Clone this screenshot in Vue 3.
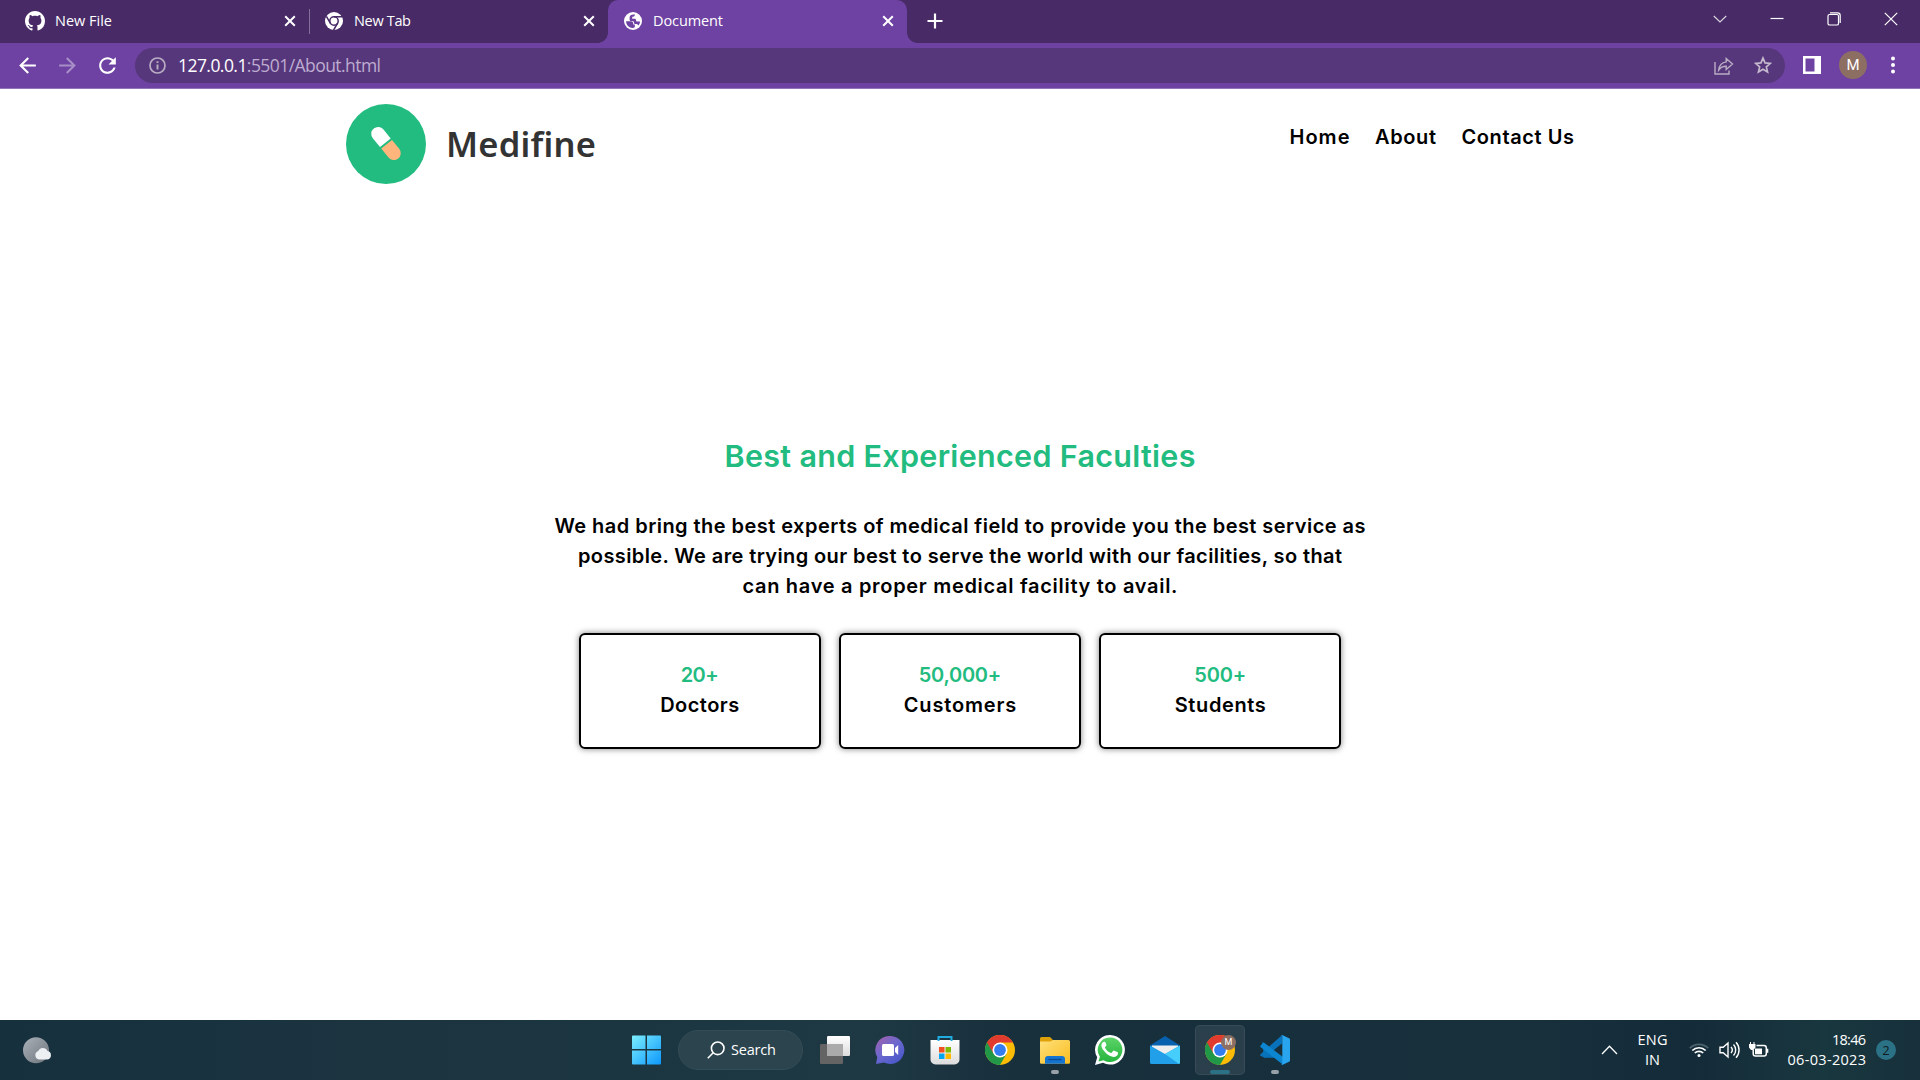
<script setup>
const tabs = [
  { title: 'New File', icon: 'github', width: 57 },
  { title: 'New Tab', icon: 'chrome', width: 57 },
  { title: 'Document', icon: 'globe', width: 70, active: true },
]
const links = [
  { label: 'Home', width: 60 },
  { label: 'About', width: 61 },
  { label: 'Contact Us', width: 112.5 },
]
const lines = [
  { text: 'We had bring the best experts of medical field to provide you the best service as', width: 811 },
  { text: 'possible. We are trying our best to serve the world with our facilities, so that', width: 764 },
  { text: 'can have a proper medical facility to avail.', width: 435 },
]
const stats = [
  { value: '20+', label: 'Doctors', vw: 38, lw: 79 },
  { value: '50,000+', label: 'Customers', vw: 82.5, lw: 112.5 },
  { value: '500+', label: 'Students', vw: 52, lw: 91 },
]

// Tracks a label so that it fills the given width.
const fit = (el, { value }) => {
  el.style.letterSpacing = '0px'
  const n = el.textContent.trim().length
  const natural = el.getBoundingClientRect().width
  el.style.letterSpacing = `${((value - natural) / (n - 1)).toFixed(3)}px`
  el.style.marginRight = `${(-(value - natural) / (n - 1)).toFixed(3)}px`
}
const vFit = { mounted: fit }
</script>

<template>
  <div class="screen">
    <header class="tabstrip">
      <div v-for="t in tabs" :key="t.title" class="tab" :class="{ active: t.active, first: t.icon === 'github' }">
        <svg v-if="t.icon === 'github'" class="fav gh" viewBox="0 0 16 16"><path fill="#fff" d="M8 0C3.58 0 0 3.58 0 8c0 3.54 2.29 6.53 5.47 7.59.4.07.55-.17.55-.38 0-.19-.01-.82-.01-1.49-2.01.37-2.53-.49-2.69-.94-.09-.23-.48-.94-.82-1.13-.28-.15-.68-.52-.01-.53.63-.01 1.08.58 1.23.82.72 1.21 1.87.87 2.33.66.07-.52.28-.87.51-1.07-1.78-.2-3.64-.89-3.64-3.95 0-.87.31-1.59.82-2.15-.08-.2-.36-1.02.08-2.12 0 0 .67-.21 2.2.82.64-.18 1.32-.27 2-.27s1.36.09 2 .27c1.53-1.04 2.2-.82 2.2-.82.44 1.1.16 1.92.08 2.12.51.56.82 1.27.82 2.15 0 3.07-1.87 3.75-3.65 3.95.29.25.54.73.54 1.48 0 1.07-.01 1.93-.01 2.2 0 .21.15.46.55.38A8.01 8.01 0 0 0 16 8c0-4.42-3.58-8-8-8z" /></svg>
        <svg v-else-if="t.icon === 'chrome'" class="fav" viewBox="0 0 18 18">
          <circle cx="9" cy="9" r="9" fill="#fff" />
          <circle cx="9" cy="9" r="4.2" fill="none" stroke="#472a66" stroke-width="1.5" />
          <path d="M9 4.8h8.2M5.3 11.1 1.4 4.3M12.7 11.1 8.6 18" fill="none" stroke="#472a66" stroke-width="1.5" />
        </svg>
        <svg v-else class="fav" viewBox="0 0 18 18">
          <circle cx="9" cy="9" r="9" fill="#fff" />
          <path fill="#6e42a2" d="M2 9.300h4.600c1.700 0 2.600.9 2.600 2.300v1h1.600v2.600c-.7.5-1.400.8-2.300.8A7 7 0 0 1 2 9.300z" />
          <path fill="#6e42a2" d="M10.800 2.200c.2 1.800-.9 2.500-2.600 2.600v1.900h2.300c1.100 0 1.600.6 1.600 1.700 0 .8.500 1.100 1.200 1.100H16c0 1.600-.7 3-1.700 4.100-.4-1-1.100-1.500-2.200-1.500h-.6c-1 0-1.500-.5-1.500-1.500 0-1-.5-1.400-1.500-1.400H7.300c-1 0-1.700-.7-1.700-1.700V5.800c0-1.700.9-2.800 2.500-3z" />
        </svg>
        <span class="tab-label"><span v-fit="t.width" class="fit">{{ t.title }}</span></span>
        <svg class="tab-x" viewBox="0 0 12 12"><path d="M1.200 1.200 10.800 10.800M10.800 1.200 1.200 10.800" stroke="#fff" stroke-width="2" /></svg>
        <i v-if="t.icon === 'github'" class="divider"></i>
      </div>
      <svg class="plus" viewBox="0 0 16 16"><path d="M8 .5v15M.5 8h15" stroke="#fff" stroke-width="2.2" /></svg>
      <div class="win">
        <svg viewBox="0 0 14 14"><path d="m.8 4 6.200 6L13.200 4" stroke-opacity=".8" /></svg>
        <svg viewBox="0 0 14 14"><path d="M.5 6.500h13" /></svg>
        <svg viewBox="0 0 14 14"><rect x="1" y="2.500" width="10.500" height="10.500" rx="1.600" /><path d="M3 .8h7.500a2.700 2.700 0 0 1 2.700 2.700V11" /></svg>
        <svg viewBox="0 0 14 14"><path d="m.8.8 12.400 12.400M13.200.8.8 13.200" /></svg>
      </div>
    </header>

    <div class="toolbar">
      <svg class="nav-i" viewBox="0 0 24 24"><path d="M20 11H7.830l5.590-5.590L12 4l-8 8 8 8 1.410-1.410L7.830 13H20v-2z" fill="#fff" /></svg>
      <svg class="nav-i dim" viewBox="0 0 24 24"><path d="m12 4-1.410 1.410L16.170 11H4v2h12.170l-5.580 5.590L12 20l8-8z" fill="#fff" /></svg>
      <svg class="nav-i" viewBox="0 0 24 24"><path d="M17.650 6.350C16.200 4.900 14.210 4 12 4c-4.420 0-7.990 3.580-7.990 8s3.570 8 7.990 8c3.730 0 6.840-2.550 7.730-6h-2.080c-.82 2.330-3.040 4-5.650 4-3.310 0-6-2.690-6-6s2.690-6 6-6c1.660 0 3.140.69 4.220 1.780L13 11h7V4l-2.350 2.350z" fill="#fff" /></svg>
      <div class="omnibox">
        <svg class="info" viewBox="0 0 17 17" fill="none" stroke="#b9adc4"><circle cx="8.500" cy="8.500" r="7.500" stroke-width="1.700" /><path d="M8.500 7.500v5M8.500 4.200v1.900" stroke-width="1.900" /></svg>
        <span class="url"><span v-fit="203" class="fit"><b>127.0.0.1</b>:5501/About.html</span></span>
        <svg class="share" viewBox="0 0 20 18" fill="none" stroke="#b9adc4" stroke-width="1.400"><path d="M1 5v12h14v-3.500" /><path d="M12.200 1.500 18.500 7l-6.300 5.500V9.300C8.700 9.200 6.500 10.500 4.700 13c.5-4.200 3-7.400 7.500-8.100z" /></svg>
        <svg class="star" viewBox="0 0 18 18" fill="none" stroke="#c4b9cd" stroke-width="1.700"><path d="m9 2 2.050 4.900 5.300.45-4 3.500 1.200 5.200L9 13.300l-4.550 2.750 1.200-5.200-4-3.500 5.300-.45z" /></svg>
      </div>
      <svg class="panel" viewBox="0 0 18 18"><path d="M0 0h18v18H0zM2.500 2.500v13h9v-13z" fill="#fff" fill-rule="evenodd" /></svg>
      <span class="avatar">M</span>
      <svg class="dots" viewBox="0 0 4 18"><circle cx="2" cy="2.500" r="2" /><circle cx="2" cy="9" r="2" /><circle cx="2" cy="15.500" r="2" /></svg>
    </div>

    <main class="page">
      <div class="site-head">
        <div class="brand">
          <svg class="logo" viewBox="0 0 80 80">
            <circle cx="40" cy="40" r="40" fill="#22bc80" />
            <g transform="translate(40 39.500) rotate(51)">
              <path d="M-1 -6.900V6.900H-12.500A6.900 6.900 0 0 1 -12.500 -6.900z" fill="#fff" />
              <path d="M1 -6.900V6.900H12.500A6.900 6.900 0 0 0 12.500 -6.900z" fill="#ffb57c" />
            </g>
          </svg>
          <span class="brand-name"><span v-fit="150" class="fit">Medifine</span></span>
        </div>
        <nav class="links"><a v-for="l in links" :key="l.label"><span v-fit="l.width" class="fit">{{ l.label }}</span></a></nav>
      </div>
      <section class="about">
        <h1><span v-fit="471" class="fit">Best and Experienced Faculties</span></h1>
        <div class="copy"><div v-for="l in lines" :key="l.text"><span v-fit="l.width" class="fit">{{ l.text }}</span></div></div>
        <div class="cards">
          <div v-for="s in stats" :key="s.label" class="card">
            <div class="value"><span v-fit="s.vw" class="fit">{{ s.value }}</span></div>
            <div><span v-fit="s.lw" class="fit">{{ s.label }}</span></div>
          </div>
        </div>
      </section>
    </main>

    <footer class="taskbar">
      <svg width="0" height="0" class="defs">
        <defs>
          <linearGradient id="win" x1="0" y1="0" x2="1" y2="1" gradientUnits="objectBoundingBox"><stop offset="0" stop-color="#7ceeff" /><stop offset="1" stop-color="#0d98fb" /></linearGradient>
          <linearGradient id="chat" x1="0" y1="0" x2=".8" y2="1"><stop offset="0" stop-color="#a55fa8" /><stop offset=".5" stop-color="#6c68cf" /><stop offset="1" stop-color="#4657c8" /></linearGradient>
          <linearGradient id="fold" x1="0" y1="0" x2="1" y2="1"><stop offset="0" stop-color="#ffe07a" /><stop offset="1" stop-color="#f9bd20" /></linearGradient>
          <linearGradient id="moon" x1="0" y1="0" x2="1" y2="1"><stop offset="0" stop-color="#a9b1b9" /><stop offset="1" stop-color="#6e747c" /></linearGradient>
          <linearGradient id="wa" x1="0" y1="0" x2="0" y2="1"><stop offset="0" stop-color="#5cd467" /><stop offset="1" stop-color="#26b43e" /></linearGradient>
          <linearGradient id="shade" x1="0" y1="0" x2="0" y2="1"><stop offset="0" stop-color="#fff" /><stop offset="1" stop-color="#dcdcdc" /></linearGradient>
          <symbol id="chrome-logo" viewBox="0 0 30 30">
            <circle cx="15" cy="15" r="15" fill="#fbbc05" />
            <path d="M15 15 2 7.500A15 15 0 0 0 15 30l6.500-11.200z" fill="#219848" />
            <path d="M2 7.500A15 15 0 0 1 28 7.500H15L8.500 18.750z" fill="#e13a2e" />
            <circle cx="15" cy="15" r="7.500" fill="#fff" /><circle cx="15" cy="15" r="5.900" fill="#347df0" />
          </symbol>
        </defs>
      </svg>
      <div class="left">
        <svg class="weather" viewBox="0 0 29 27"><circle cx="13" cy="13.300" r="13" fill="url(#moon)" /><path d="M16 22.500a4.400 4.400 0 0 1-.7-8.500 5 5 0 0 1 9.200 0 4.300 4.300 0 0 1-.5 8.500z" fill="#edf0f3" /></svg>
      </div>
      <div class="apps">
        <div class="slot"><svg width="30" height="30" viewBox="0.500 0 30 30"><path fill="url(#win)" d="M1.500.5h12.500V14H.5V1.500a1 1 0 0 1 1-1zM15.500.5h13a1 1 0 0 1 1 1V14h-14zM.5 15.500H14v14H1.500a1 1 0 0 1-1-1zM15.500 15.500h14v13a1 1 0 0 1-1 1h-13z" /></svg></div>
        <div class="search">
          <svg viewBox="0 0 18 18" fill="none" stroke="#fff" stroke-width="1.600"><circle cx="10.700" cy="7.300" r="6.300" /><path d="M6.200 11.800.8 17.200" /></svg>
          <span v-fit="45" class="fit">Search</span>
        </div>
        <div class="slot"><svg width="30" height="30" viewBox="0 0 30 30"><rect y="9" width="23" height="20" rx="1.200" fill="#646464" /><rect x="7" y="1" width="23" height="20" rx="1.200" fill="url(#shade)" /><path d="M7 9h16v12H7z" fill="#aaa" /></svg></div>
        <div class="slot"><svg width="30" height="30" viewBox="0 0 30 30"><path d="M15.500 1A14 14 0 1 1 9 27.500L1 29l1.300-7A14 14 0 0 1 15.500 1z" fill="url(#chat)" /><rect x="7" y="9" width="12" height="12" rx="1.500" fill="#fff" /><path d="m20 13 3.200-3v10L20 17z" fill="#fff" /></svg></div>
        <div class="slot"><svg width="30" height="30" viewBox="0 0 30 30"><path d="M.5 5h29v19.500a5 5 0 0 1-5 5h-19a5 5 0 0 1-5-5z" fill="url(#shade)" /><path d="M8.500 6V2h13v4" fill="none" stroke="#20ace0" stroke-width="2" /><path d="M9 12h5.500v5.500H9z" fill="#f25022" /><path d="M15.500 12H21v5.500h-5.500z" fill="#7fba00" /><path d="M9 18.500h5.500V24H9z" fill="#00a4ef" /><path d="M15.500 18.500H21V24h-5.500z" fill="#ffb900" /></svg></div>
        <div class="slot"><svg width="30" height="30"><use href="#chrome-logo" /></svg></div>
        <div class="slot"><svg width="30" height="30" viewBox="0 0 30 30"><path d="M0 3.500A1.500 1.500 0 0 1 1.500 2H10l3 3v4H0z" fill="#dfa10a" /><path d="M0 6.500h10.500L13 5h15.500A1.500 1.500 0 0 1 30 6.500v21A1.200 1.200 0 0 1 28.800 28.700H1.200A1.200 1.200 0 0 1 0 27.500z" fill="url(#fold)" /><path d="M5 28.700V24a3 3 0 0 1 3-3h14a3 3 0 0 1 3 3v4.700z" fill="#1474cf" /><path d="M8.500 24.500h13" stroke="#0b4b92" stroke-width="1.300" /></svg><i class="run"></i></div>
        <div class="slot"><svg width="30" height="30" viewBox="0 0 30 30"><path d="M15.200 0A14.800 14.800 0 1 1 8 27.800L0 30l2.200-7.700A14.800 14.800 0 0 1 15.200 0z" fill="#fff" /><path d="M15.200 2.500A12.300 12.300 0 1 1 8.500 25.200l-5 1.300 1.400-4.800A12.300 12.300 0 0 1 15.200 2.500z" fill="url(#wa)" /><path d="M10.600 7.600c-.5-1-.9-.9-1.500-.9-1 0-2.700 1.200-2.700 3.700 0 1.400.7 3 1.900 4.600 2 2.900 4.800 5.300 8.400 6.600 3 .9 5.800-.4 6.200-2.600.2-1.400.1-1.500-.6-1.900l-3-1.400c-.7-.3-.9-.1-1.300.4l-1.300 1.600c-.3.300-.6.300-1.100.1-2.400-1-4.300-2.700-5.500-4.900-.3-.5 0-.8.300-1.100l1.100-1.500z" fill="#fff" /></svg></div>
        <div class="slot"><svg width="30" height="30" viewBox="0 0 30 30"><path d="M0 10.500 15 1l15 9.500v8H0z" fill="#0861ae" /><path d="M2 10.500h26v10H2z" fill="#eee" /><path d="M0 10.500 15 19l15-8.500v17a1.500 1.500 0 0 1-1.500 1.500h-27A1.500 1.500 0 0 1 0 27.500z" fill="#219fe8" /><path d="M15 19 30 10.500v17a1.500 1.500 0 0 1-1 1.400z" fill="#45cdfb" /></svg></div>
        <div class="slot on"><svg width="30" height="30"><use href="#chrome-logo" /></svg><span class="badge">M</span><i class="run wide"></i></div>
        <div class="slot"><svg width="30" height="30" viewBox="0 0 30 30"><path d="m2.300 6.800 20 16.400v-.1L4 22.500.5 20.700c-.5-.4-.5-1 0-1.500L22.200 0v8.200L4 23.200z" fill="#0872bb" /><path d="M.5 10.800 2.800 8c.5-.5 1.200-.4 1.700 0L23 22v7.800L.5 12c-.5-.3-.4-.8 0-1.200z" fill="#0d86d2" /><path d="M22.200 0 29 3.200c.7.300 1 .8 1 1.500v20.600c0 .7-.3 1.200-1 1.500L22.200 30c-.6.200-1 .1-1.500-.4.800.5 1.600.1 1.600-.8V1.200c0-.9-.8-1.300-1.600-.8.500-.5.900-.6 1.500-.4z" fill="#29a5f0" /></svg><i class="run"></i></div>
      </div>
      <div class="tray">
        <svg class="chev" viewBox="0 0 17 10"><path d="M1 9 8.500 1.200 16 9" /></svg>
        <div class="lang"><span><span v-fit="30" class="fit">ENG</span></span><span>IN</span></div>
        <svg class="wifi" viewBox="0 0 20 16" fill="none" stroke="#fff" stroke-width="1.700"><path d="M.8 6.200a13 13 0 0 1 18.400 0" stroke="#4c626c" /><path d="M3.300 8.500a9.500 9.500 0 0 1 13.400 0M5.800 11a6 6 0 0 1 8.400 0" /><circle cx="10" cy="13.500" r="1.500" fill="#fff" stroke="none" /></svg>
        <svg class="vol" viewBox="0 0 21 18" fill="none" stroke="#fff" stroke-width="1.400"><path d="M1 6.200h3.200L9 2v14l-4.800-4.200H1z" /><path d="M12 6a4.500 4.500 0 0 1 0 6M14.500 3.500a8 8 0 0 1 0 11M17 1.200a11.500 11.500 0 0 1 0 15.600" /></svg>
        <svg class="bat" viewBox="0 0 20 17" fill="none" stroke="#fff"><path d="M7.500 3.500H15A2.300 2.300 0 0 1 17.300 5.800v6a2.300 2.300 0 0 1-2.300 2.300H6.500a2.300 2.300 0 0 1-2.300-2.300V8" stroke-width="1.500" /><path d="M6 6.500h7v5.800H6z" fill="#fff" stroke="none" /><path d="M18 6.800h1.300v4H18zM0 2h6.500v3.500L4.500 8H2L0 5.500zM1 0h1v2H1zM4.500 0h1v2h-1z" fill="#fff" stroke="none" /></svg>
        <div class="clock"><span><span v-fit="34" class="fit">18:46</span></span><span><span v-fit="78.500" class="fit">06-03-2023</span></span></div>
        <span class="count">2</span>
      </div>
    </footer>
  </div>
</template>

<style>
body { margin: 0; overflow: hidden; }
</style>

<style scoped>
.screen { width: 1920px; height: 1080px; display: flex; flex-direction: column; background: #fff; font-family: "Open Sans", "Noto Sans", sans-serif; overflow: hidden; }
.screen svg { display: block; flex: none; }
.fit { display: inline-block; white-space: nowrap; }

.tabstrip { height: 43px; flex: none; background: #472a66; display: flex; align-items: flex-start; color: #fff; }
.tab { box-sizing: border-box; width: 299px; height: 43px; padding: 0 13px 1px 16px; display: flex; align-items: center; position: relative; }
.tab.first { width: 309px; padding-left: 25px; padding-right: 13px; }
.tab.active { background: #6e42a2; border-radius: 10px 10px 0 0; }
.tab.active::before, .tab.active::after { content: ""; position: absolute; bottom: 0; width: 10px; height: 10px; }
.tab.active::before { left: -10px; background: radial-gradient(circle at 0 0, transparent 9.500px, #6e42a2 10px); }
.tab.active::after { right: -10px; background: radial-gradient(circle at 100% 0, transparent 9.500px, #6e42a2 10px); }
.fav { width: 18px; height: 18px; }
.fav.gh { width: 20px; height: 20px; }
.tab-label { flex: 1; margin-left: 11px; font-size: 14.500px; line-height: 20px; }
.first .tab-label { margin-left: 10px; }
.tab-x { width: 12px; height: 12px; }
.divider { position: absolute; right: -1px; top: 9px; width: 1px; height: 25px; background: #846f9a; }
.plus { width: 16px; height: 16px; margin: 13px 0 0 20px; }
.win { margin-left: auto; display: flex; gap: 43px; padding: 12px 22px 0 0; }
.win svg { width: 14px; height: 14px; fill: none; stroke: #fff; stroke-width: 1.200; }

.toolbar { box-sizing: border-box; height: 46px; flex: none; padding: 0 25px 1px 15px; background: #6e42a2; border-bottom: 1px solid #9474b9; display: flex; align-items: center; }
.nav-i { width: 25px; height: 25px; margin-right: 15px; }
.nav-i.dim { opacity: .4; }
.omnibox { box-sizing: border-box; width: 1650px; height: 35px; border-radius: 18px; background: #57377b; display: flex; align-items: center; padding: 0 13.500px 0 14px; }
.info { width: 17px; height: 17px; }
.url { flex: 1; margin-left: 12px; font-size: 17.500px; line-height: 26px; color: #bdacd0; }
.url b { font-weight: 400; color: #fff; }
.share { width: 20px; height: 18px; margin: 1px 20px 0 0; }
.star { width: 18px; height: 18px; }
.panel { width: 18px; height: 18px; margin-left: 18px; }
.avatar { width: 28px; height: 28px; border-radius: 50%; background: #8d6e63; color: #fff; font: 400 15px/28px Roboto, sans-serif; text-align: center; margin-left: 18px; }
.dots { width: 4px; height: 18px; margin-left: auto; fill: #fff; }

.page { flex: 1; display: flex; flex-direction: column; align-items: center; color: #000; font: 560 20px/30px Inter, sans-serif; }
.site-head { width: 1228px; height: 110px; display: flex; justify-content: space-between; align-items: flex-start; }
.brand { display: flex; align-items: center; margin-top: 15px; }
.logo { width: 80px; height: 80px; }
.brand-name { margin-left: 20px; font: 650 34.500px/48px "Noto Sans", sans-serif; color: #333; }
.links { display: flex; gap: 25.500px; padding-top: 33px; }
.about { display: flex; flex-direction: column; align-items: center; margin-top: 234px; text-align: center; }
h1 { margin: 0; font-size: 30.500px; line-height: 45px; font-weight: 580; color: #22bc80; }
.copy { margin-top: 33px; }
.cards { display: flex; gap: 18.600px; margin-top: 32px; }
.card { box-sizing: border-box; width: 241.700px; height: 116px; padding: 25px 0; border: 2px solid #000; border-radius: 6px; box-shadow: 0 0 6px rgba(0, 0, 0, .5); }
.value { color: #22bc80; }

.taskbar { height: 60px; flex: none; position: relative; display: grid; grid-template-columns: 622px 678px 1fr; background: linear-gradient(90deg, #17303e 0, #1b3440 20%, #1c3641 33%, #1e3944 45%, #182f3c 53%, #17303c 80%, #142b39 88%, #19373f 95%, #17303b 100%); color: #fff; }
.defs { position: absolute; }
.left { padding: 17px 0 0 23px; }
.weather { width: 29px; height: 27px; }
.apps { display: flex; align-items: center; gap: 5px; }
.slot { box-sizing: border-box; width: 50px; height: 50px; display: flex; align-items: center; justify-content: center; position: relative; }
.slot.on { background: rgba(255, 255, 255, .08); border: 1px solid rgba(255, 255, 255, .07); border-radius: 5px; }
.run { position: absolute; bottom: 1px; left: 21px; width: 8px; height: 4px; border-radius: 2px; background: #98a1a7; }
.run.wide { left: 14px; bottom: 0; width: 20px; background: #2b7286; }
.badge { position: absolute; left: 25px; top: 9px; width: 15px; height: 15px; border-radius: 50%; background: #8d6e63; font: 9px/15px Roboto, sans-serif; text-align: center; }
.search { box-sizing: border-box; width: 125px; height: 40px; margin: 0 2px 0 1px; padding-left: 28px; border-radius: 20px; border: 1px solid #344c56; background: #2b444e; display: flex; align-items: center; gap: 6px; font-size: 14.500px; line-height: 20px; }
.search svg { width: 18px; height: 18px; }
.tray { display: flex; align-items: center; justify-content: flex-end; padding-right: 24px; font-size: 14.500px; line-height: 20px; }
.chev { width: 17px; height: 10px; fill: none; stroke: #fff; stroke-width: 1.300; }
.lang { width: 31px; margin-left: 19px; display: flex; flex-direction: column; align-items: center; }
.wifi { width: 20px; height: 16px; margin-left: 21px; }
.vol { width: 21px; height: 18px; margin-left: 10px; }
.bat { width: 20px; height: 17px; margin-left: 9px; }
.clock { width: 79px; margin-left: 18px; display: flex; flex-direction: column; align-items: flex-end; }
.count { width: 20px; height: 20px; margin-left: 10px; border-radius: 50%; background: #2b7286; color: #101c22; font-size: 13px; line-height: 20px; text-align: center; }
</style>
